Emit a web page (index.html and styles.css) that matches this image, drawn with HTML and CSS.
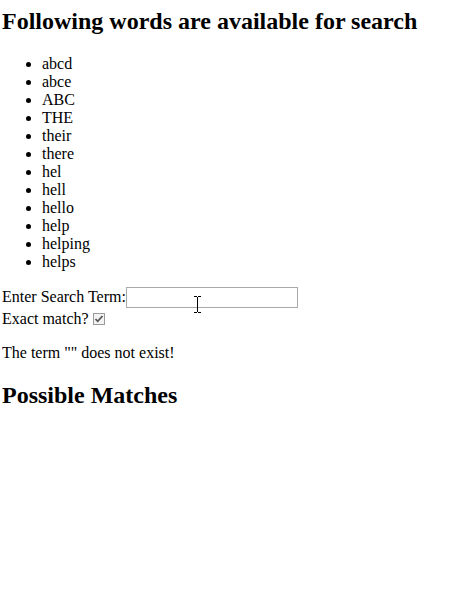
FILE: index.html
```html
<!DOCTYPE html>
<html>
<head>
<meta charset="utf-8">
<link rel="stylesheet" href="styles.css">
</head>
<body>
<h2 class="title">Following words are available for search</h2>
<ul class="words">
<li>abcd</li>
<li>abce</li>
<li>ABC</li>
<li>THE</li>
<li>their</li>
<li>there</li>
<li>hel</li>
<li>hell</li>
<li>hello</li>
<li>help</li>
<li>helping</li>
<li>helps</li>
</ul>
<div class="form">
<div class="row first">Enter Search Term:<span class="field"><input class="search" type="text"><svg class="cursor" width="9" height="17" viewBox="0 0 9 17"><path d="M1 0.5h3M5 0.5h3M4.5 1v15M1 16.5h3M5 16.5h3" stroke="#000" stroke-width="1" fill="none"/></svg></span></div>
<div class="row">Exact match? <input class="check" type="checkbox" checked></div>
</div>
<p class="msg">The term "" does not exist!</p>
<h2 class="sub">Possible Matches</h2>
</body>
</html>
```
FILE: styles.css
```css
html, body {
  background: #fff;
}
body {
  margin: 0 2px;
  font-family: "Liberation Serif", "Times New Roman", serif;
  font-size: 16px;
  color: #000;
}
.title {
  font-size: 24px;
  font-weight: bold;
  margin: 8px 0 20px;
}
.words {
  margin: 0 0 16px;
  padding-left: 40px;
}
.words li {
  line-height: 18px;
}
.form .row {
  line-height: 18px;
}
.form .first {
  margin-bottom: 2px;
}
.field {
  position: relative;
  display: inline-block;
  vertical-align: baseline;
}
.search {
  width: 168px;
  height: 17px;
  border: 1px solid #a9a9a9;
  padding: 1px;
  margin: 0;
  font-size: 13px;
  vertical-align: baseline;
  box-sizing: content-box;
}
.cursor {
  position: absolute;
  left: 67px;
  top: 9px;
}
.check {
  appearance: none;
  -webkit-appearance: none;
  width: 12px;
  height: 12px;
  margin: 0 0 -1px 0;
  border: 1px solid #9a9a9a;
  background: #f2f2f2 url("data:image/svg+xml;utf8,<svg xmlns='http://www.w3.org/2000/svg' width='12' height='12'><path d='M2.5 6l2.2 2.3L9.5 3' stroke='%23555' stroke-width='1.8' fill='none'/></svg>") no-repeat center;
  box-sizing: border-box;
  vertical-align: baseline;
}
.msg {
  margin: 16px 0;
}
.sub {
  font-size: 24px;
  font-weight: bold;
  margin: 20px 0;
}
```
